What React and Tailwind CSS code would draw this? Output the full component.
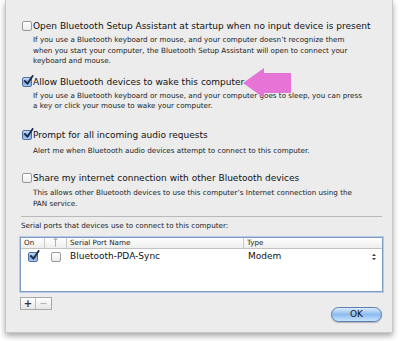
import React from 'react';

const font = { fontFamily: '"DejaVu Sans", Verdana, sans-serif' };

function Box({ checked, className = '' }) {
  if (checked) {
    return (
      <span className={`relative inline-block w-[10px] h-[10px] rounded-[2px] border border-[#4f6f9e] bg-gradient-to-b from-[#c7dcf5] via-[#7fa9de] to-[#a9c8ef] shrink-0 ${className}`}>
        <svg viewBox="0 0 12 12" className="absolute left-[0px] top-[-3px] w-[11px] h-[11px]">
          <path d="M2 6.5 L4.8 9.5 L10.5 1" fill="none" stroke="#1b2a4a" strokeWidth="2" strokeLinecap="round" strokeLinejoin="round" />
        </svg>
      </span>
    );
  }
  return (
    <span className={`inline-block w-[10px] h-[10px] rounded-[2px] border border-[#9a9a9a] bg-gradient-to-b from-white to-[#ececec] shrink-0 ${className}`} />
  );
}

function Option({ checked, label, lines, top, descGap }) {
  return (
    <div style={{ marginTop: top }}>
      <div className="flex items-center h-[12px]">
        <Box checked={checked} className="ml-[16px]" />
        <span className="ml-[1px] text-[9px] leading-[12px] text-[#111] whitespace-nowrap">{label}</span>
      </div>
      <div className="ml-[27px] text-[7.2px] leading-[10.5px] text-[#222]" style={{ marginTop: descGap }}>
        {lines.map((l) => (
          <div key={l} className="whitespace-nowrap">{l}</div>
        ))}
      </div>
    </div>
  );
}

export default function App() {
  return (
    <div className="relative w-[400px] h-[341px] bg-white overflow-hidden" style={font}>
      <div className="ml-[5px] w-[388px] h-[333px] bg-[#ececec] border-x border-b border-[#c8c8c8] shadow-[0_3px_6px_rgba(0,0,0,0.35)] flex flex-col">
        <Option
          checked={false}
          top={20}
          descGap={3}
          label="Open Bluetooth Setup Assistant at startup when no input device is present"
          lines={[
            'If you use a Bluetooth keyboard or mouse, and your computer doesn’t recognize them',
            'when you start your computer, the Bluetooth Setup Assistant will open to connect your',
            'keyboard and mouse.',
          ]}
        />
        <Option
          checked
          top={9}
          descGap={3}
          label="Allow Bluetooth devices to wake this computer"
          lines={[
            'If you use a Bluetooth keyboard or mouse, and your computer goes to sleep, you can press',
            'a key or click your mouse to wake your computer.',
          ]}
        />
        <Option
          checked
          top={17}
          descGap={5}
          label="Prompt for all incoming audio requests"
          lines={['Alert me when Bluetooth audio devices attempt to connect to this computer.']}
        />
        <Option
          checked={false}
          top={16}
          descGap={4}
          label="Share my internet connection with other Bluetooth devices"
          lines={[
            'This allows other Bluetooth devices to use this computer’s Internet connection using the',
            'PAN service.',
          ]}
        />

        <div className="mt-[7px] ml-[15px] w-[361px] h-px bg-[#b9b9b9]" />

        <div className="mt-[3px] ml-[15px] text-[7.2px] leading-[11px] text-[#222]">
          Serial ports that devices use to connect to this computer:
        </div>

        <div className="mt-[6px] ml-[14px] w-[363px] h-[55px] border border-[#7f9cc6] shadow-[0_0_0_1px_#b6cbe8] bg-white">
          <div className="flex h-[11px] border-b border-[#c2c2c2] bg-gradient-to-b from-white to-[#ededed] text-[7.2px] leading-[10px] text-[#222]">
            <div className="w-[24px] pl-[3px] border-r border-[#c9c9c9]">On</div>
            <div className="w-[22px] border-r border-[#c9c9c9] flex justify-center">
              <svg viewBox="0 0 6 10" className="w-[5px] h-[9px]">
                <rect x="1" y="0" width="4" height="2" fill="#b0b0b0" />
                <rect x="2.4" y="2" width="1.2" height="8" fill="#b0b0b0" />
              </svg>
            </div>
            <div className="w-[177px] pl-[3px] border-r border-[#c9c9c9]">Serial Port Name</div>
            <div className="pl-[3px]">Type</div>
          </div>
          <div className="flex items-center h-[16px] text-[9px] text-[#111]">
            <div className="w-[24px] flex justify-center">
              <Box checked />
            </div>
            <div className="w-[22px] flex justify-center">
              <Box checked={false} />
            </div>
            <div className="w-[177px] pl-[3px]">Bluetooth-PDA-Sync</div>
            <div className="flex-1 pl-[4px] flex items-center justify-between pr-[6px]">
              <span>Modem</span>
              <svg viewBox="0 0 6 10" className="w-[4px] h-[8px]">
                <path d="M3 0 L6 3.5 L0 3.5 Z M3 10 L6 6.5 L0 6.5 Z" fill="#444" />
              </svg>
            </div>
          </div>
        </div>

        <div className="flex items-start justify-between ml-[14px] mr-[10px] mt-[5px]">
          <div className="flex h-[13px] border border-[#a8a8a8] bg-gradient-to-b from-white to-[#e6e6e6] text-[10px] leading-[11px]">
            <div className="w-[15px] text-center text-[#333] border-r border-[#bdbdbd] font-bold">+</div>
            <div className="w-[15px] text-center text-[#aaa]">−</div>
          </div>
          <div className="mt-[10px] w-[51px] h-[15px] rounded-full border border-[#5a7fb5] bg-gradient-to-b from-[#dcebfb] via-[#8cbcf0] to-[#c8e2fb] shadow-[0_1px_1px_rgba(0,0,0,0.25)] text-[9px] leading-[13px] text-center text-[#111]">
            OK
          </div>
        </div>
      </div>

      <svg className="absolute left-0 top-0 w-[400px] h-[341px] pointer-events-none" viewBox="0 0 400 341">
        <polygon points="243,83 264,68 264,73 291,73 291,93 264,93 264,98" fill="#e574d6" />
      </svg>
    </div>
  );
}
